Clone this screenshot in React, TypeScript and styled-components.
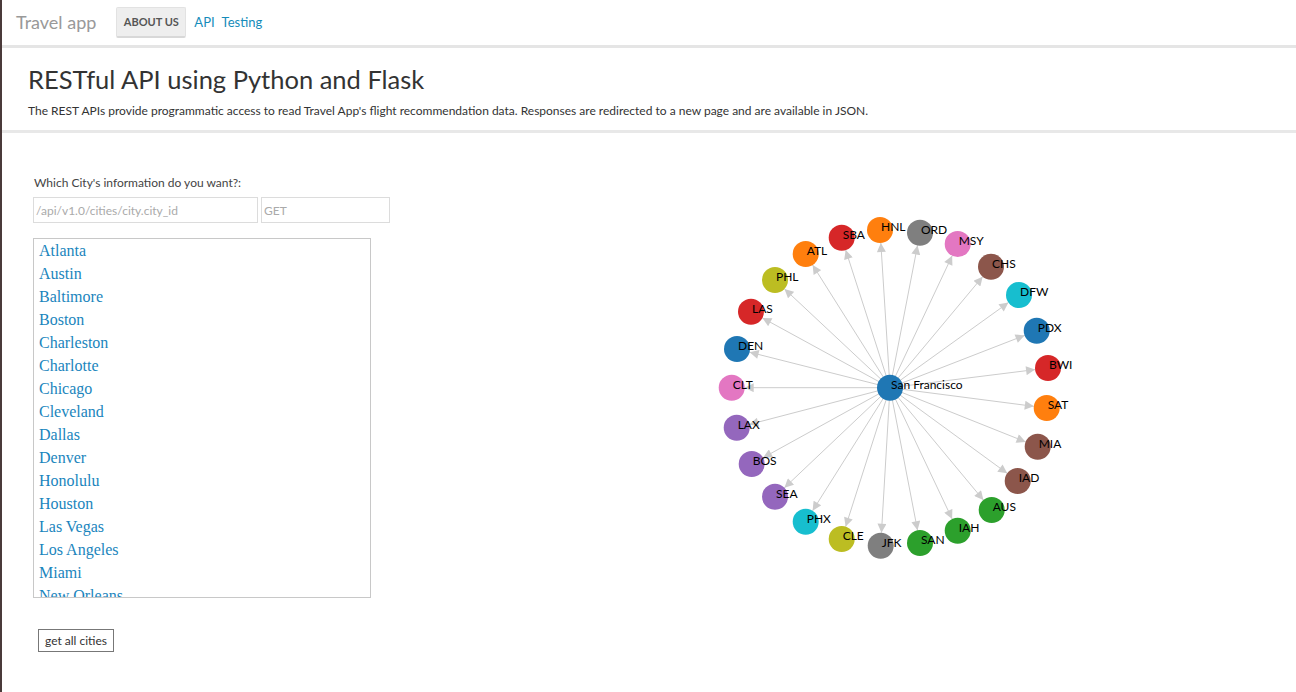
import React from 'react';
import styled, { createGlobalStyle } from 'styled-components';

const GlobalStyle = createGlobalStyle`
  html, body {
    margin: 0;
    padding: 0;
    background: #fff;
  }
  body {
    min-height: 692px;
    border-left: 2px solid #4a3a3a;
    font-family: Lato, "Open Sans", "Liberation Sans", sans-serif;
    color: #333;
  }
`;

const Navbar = styled.nav`
  display: flex;
  align-items: center;
  height: 44px;
  padding: 0 14px 1px;
  border-bottom: 3px solid #e5e5e5;
  background: #fff;
`;

const Brand = styled.span`
  font-size: 18px;
  color: #999;
  margin-right: 20px;
`;

const AboutButton = styled.button`
  height: 31px;
  width: 70px;
  padding: 0;
  margin-right: 8px;
  background: #eee;
  border: 1px solid #e2e2e2;
  border-bottom: 2px solid #d8d8d8;
  border-radius: 2px;
  font-family: inherit;
  font-size: 11px;
  font-weight: 700;
  color: #555;
  text-transform: uppercase;
`;

const NavLink = styled.a`
  font-size: 13px;
  color: #158cba;
  text-decoration: none;
  margin-right: 7px;
`;

const Header = styled.header`
  padding: 15px 26px 11px;
  border-bottom: 3px solid #e8e8e8;
`;

const Title = styled.h1`
  margin: 0;
  font-size: 25.5px;
  line-height: 32px;
  font-weight: 400;
  color: #333;
`;

const Lead = styled.p`
  margin: 8px 0 0;
  font-size: 12px;
  line-height: 16px;
  color: #333;
`;

const Main = styled.main`
  display: flex;
  align-items: flex-start;
  padding: 42px 0 0 31px;
`;

const Panel = styled.section`
  width: 358px;
  display: flex;
  flex-direction: column;
  align-items: flex-start;
`;

const Label = styled.label`
  font-size: 12px;
  color: #444;
  margin-bottom: 7px;
  padding-left: 1px;
`;

const InputRow = styled.div`
  display: flex;
  gap: 3px;
`;

const Field = styled.input<{ $w: number }>`
  box-sizing: border-box;
  width: ${p => p.$w}px;
  height: 26px;
  padding: 0 2px;
  border: 1px solid #dcdcdc;
  font-family: inherit;
  font-size: 12px;
  color: #555;
  &::placeholder {
    color: #aaa;
  }
`;

const CityList = styled.ul`
  box-sizing: border-box;
  list-style: none;
  margin: 15px 0 0;
  padding: 0 5px;
  width: 338px;
  height: 360px;
  overflow: hidden;
  border: 1px solid #c8c8c8;
`;

const City = styled.li`
  font-family: Georgia, "Liberation Serif", serif;
  font-size: 16px;
  line-height: 23px;
  color: #1a85bd;
`;

const AllButton = styled.button`
  margin: 31px 0 0 5px;
  height: 23px;
  padding: 0 6px;
  background: #fff;
  border: 1px solid #777;
  border-radius: 0;
  font-family: inherit;
  font-size: 12px;
  color: #333;
`;

const Graph = styled.svg`
  margin: 25px 0 0 299px;
  flex: none;
`;

const cities = [
  'Atlanta', 'Austin', 'Baltimore', 'Boston', 'Charleston', 'Charlotte', 'Chicago',
  'Cleveland', 'Dallas', 'Denver', 'Honolulu', 'Houston', 'Las Vegas', 'Los Angeles',
  'Miami', 'New Orleans',
];

const C = {
  blue: '#1f77b4', orange: '#ff7f0e', green: '#2ca02c', red: '#d62728', purple: '#9467bd',
  brown: '#8c564b', pink: '#e377c2', gray: '#7f7f7f', olive: '#bcbd22', cyan: '#17becf',
};

const hub = { id: 'San Francisco', x: 890, y: 387.7, color: C.blue };

const nodes = [
  { id: 'HNL', x: 880, y: 230, color: C.orange },
  { id: 'ORD', x: 920, y: 232.7, color: C.gray },
  { id: 'MSY', x: 957.7, y: 244, color: C.pink },
  { id: 'CHS', x: 991, y: 266.7, color: C.brown },
  { id: 'DFW', x: 1019, y: 295, color: C.cyan },
  { id: 'PDX', x: 1036.7, y: 330.7, color: C.blue },
  { id: 'BWI', x: 1048, y: 368, color: C.red },
  { id: 'SAT', x: 1046.7, y: 408, color: C.orange },
  { id: 'MIA', x: 1037.7, y: 446.7, color: C.brown },
  { id: 'IAD', x: 1017.7, y: 481, color: C.brown },
  { id: 'AUS', x: 991.7, y: 510, color: C.green },
  { id: 'IAH', x: 957.7, y: 530.7, color: C.green },
  { id: 'SAN', x: 920, y: 543, color: C.green },
  { id: 'JFK', x: 880.7, y: 545.7, color: C.gray },
  { id: 'CLE', x: 841.7, y: 539, color: C.olive },
  { id: 'PHX', x: 805.7, y: 521.7, color: C.cyan },
  { id: 'SEA', x: 775, y: 496.7, color: C.purple },
  { id: 'BOS', x: 751.7, y: 464, color: C.purple },
  { id: 'LAX', x: 736.7, y: 427.7, color: C.purple },
  { id: 'CLT', x: 731.7, y: 387.7, color: C.pink },
  { id: 'DEN', x: 737, y: 349, color: C.blue },
  { id: 'LAS', x: 751, y: 311.7, color: C.red },
  { id: 'PHL', x: 775, y: 280, color: C.olive },
  { id: 'ATL', x: 805.7, y: 254, color: C.orange },
  { id: 'SBA', x: 841.7, y: 237.7, color: C.red },
];

const R = 13;

const edgeEnd = (n: { x: number; y: number }) => {
  const dx = n.x - hub.x;
  const dy = n.y - hub.y;
  const d = Math.sqrt(dx * dx + dy * dy);
  return { x: hub.x + (dx * (d - R)) / d, y: hub.y + (dy * (d - R)) / d };
};

const RouteGraph = () => (
  <Graph width={400} height={380} viewBox="690 200 400 380">
    <defs>
      <marker id="arrow" viewBox="0 -5 10 10" refX={10} refY={0} markerWidth={10} markerHeight={9} markerUnits="userSpaceOnUse" orient="auto">
        <path d="M0,-5L10,0L0,5" fill="#ccc" />
      </marker>
    </defs>
    {nodes.map(n => {
      const e = edgeEnd(n);
      return <line key={'l' + n.id} x1={hub.x} y1={hub.y} x2={e.x} y2={e.y} stroke="#ccc" strokeWidth={1} markerEnd="url(#arrow)" />;
    })}
    {[hub, ...nodes].map(n => (
      <circle key={'c' + n.id} cx={n.x} cy={n.y} r={R} fill={n.color} />
    ))}
    {[hub, ...nodes].map(n => (
      <text key={'t' + n.id} x={n.x + 1} y={n.y + 1} fontSize={12} fontFamily="Lato, 'Open Sans', sans-serif" fill="#000">
        {n.id}
      </text>
    ))}
  </Graph>
);

const App = () => {
  return (
    <>
      <GlobalStyle />
      <Navbar>
        <Brand>Travel app</Brand>
        <AboutButton type="button">About us</AboutButton>
        <NavLink href="#">API</NavLink>
        <NavLink href="#">Testing</NavLink>
      </Navbar>
      <Header>
        <Title>RESTful API using Python and Flask</Title>
        <Lead>
          The REST APIs provide programmatic access to read Travel App's flight recommendation data. Responses are
          redirected to a new page and are available in JSON.
        </Lead>
      </Header>
      <Main>
        <Panel>
          <Label>Which City's information do you want?:</Label>
          <InputRow>
            <Field $w={225} placeholder="/api/v1.0/cities/city.city_id" />
            <Field $w={129} placeholder="GET" />
          </InputRow>
          <CityList>
            {cities.map(c => (
              <City key={c}>{c}</City>
            ))}
          </CityList>
          <AllButton type="button">get all cities</AllButton>
        </Panel>
        <RouteGraph />
      </Main>
    </>
  );
};

export default App;
